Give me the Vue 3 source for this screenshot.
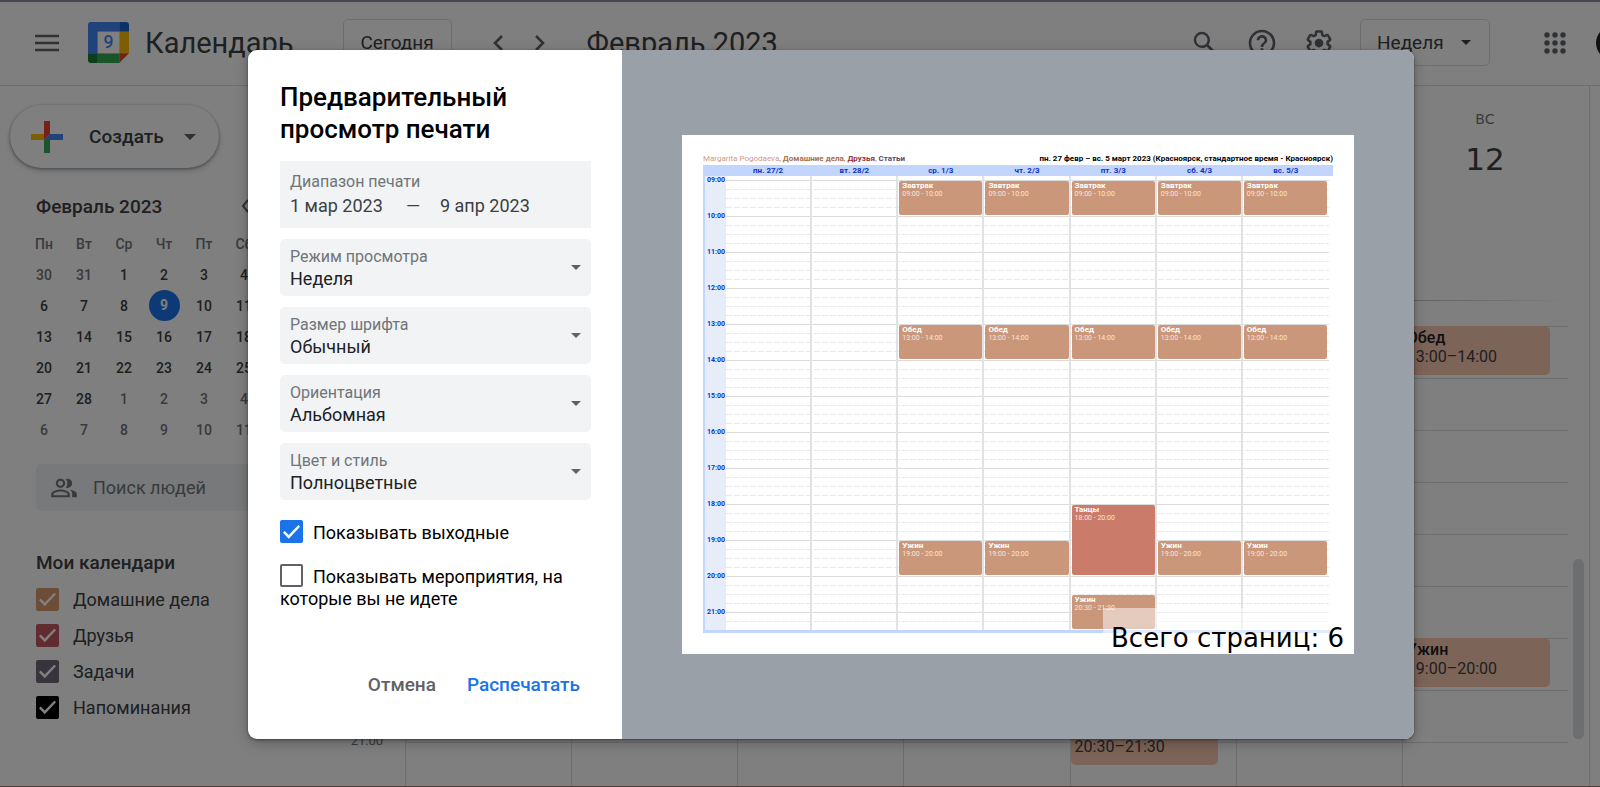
<script setup>
import { ref } from 'vue'

const weekdays = ['Пн', 'Вт', 'Ср', 'Чт', 'Пт', 'Сб']
const weeks = [
  [30, 31, 1, 2, 3, 4],
  [6, 7, 8, 9, 10, 11],
  [13, 14, 15, 16, 17, 18],
  [20, 21, 22, 23, 24, 25],
  [27, 28, 1, 2, 3, 4],
  [6, 7, 8, 9, 10, 11],
]
const isOther = (w, d) => (w === 0 && d > 20) || (w === 4 && d < 20) || w === 5
const isToday = (w, d) => w === 1 && d === 9

const calendars = [
  { id: 'home', name: 'Домашние дела', tone: 'tan' },
  { id: 'friends', name: 'Друзья', tone: 'rose' },
  { id: 'tasks', name: 'Задачи', tone: 'slate' },
  { id: 'reminders', name: 'Напоминания', tone: 'ink' },
]

const fields = [
  { id: 'view', label: 'Режим просмотра', value: 'Неделя' },
  { id: 'font', label: 'Размер шрифта', value: 'Обычный' },
  { id: 'orient', label: 'Ориентация', value: 'Альбомная' },
  { id: 'color', label: 'Цвет и стиль', value: 'Полноцветные' },
]
const weekends = ref(true)
const declined = ref(false)

const lunch = { title: 'Обед', from: 13, to: 14 }
const dinner = { title: 'Ужин', from: 19, to: 20 }
const lateDinner = { title: 'Ужин', from: 20.5, to: 21.5 }
const breakfast = { title: 'Завтрак', from: 9, to: 10 }
const dance = { title: 'Танцы', from: 18, to: 20, tone: 'red' }

const usual = [breakfast, lunch, dinner]
const days = [
  { name: 'пн. 27/2', events: [] },
  { name: 'вт. 28/2', events: [] },
  { name: 'ср. 1/3', events: usual },
  { name: 'чт. 2/3', events: usual },
  { name: 'пт. 3/3', events: [breakfast, lunch, dance, lateDinner] },
  { name: 'сб. 4/3', events: usual },
  { name: 'вс. 5/3', events: usual },
]
const mainDays = [[], [], [], [], [lateDinner], [], [lunch, dinner]]

const clock = (h) => String(Math.floor(h)).padStart(2, '0') + ':' + (h % 1 ? '30' : '00')
const hours = Array.from({ length: 13 }, (_, i) => clock(9 + i))

// The printed sheet covers 9:00 to 21:30
const sheetPlace = (e) => ({
  top: ((e.from - 9) / 12.5) * 100 + '%',
  height: ((e.to - e.from) / 12.5) * 100 + '%',
})
// The week grid behind covers nine hours from 13:00
const gridPlace = (e) => ({
  top: ((e.from - 13) / 9) * 100 + '%',
  height: ((e.to - e.from) / 9) * 100 + '%',
})
</script>

<template>
  <div class="app">
    <header class="bar">
      <button class="icon menu" aria-label="Главное меню">
        <svg width="24" height="18" viewBox="0 0 24 18"><path d="M0 2h24M0 9h24M0 16h24" stroke="currentColor" stroke-width="2.4" /></svg>
      </button>
      <svg class="logo" width="41" height="41" viewBox="0 0 42 42">
        <path d="M3 0h29v10H10v22H0V3a3 3 0 0 1 3-3z" fill="#4285f4" />
        <path d="M32 0h7a3 3 0 0 1 3 3v7H32z" fill="#1967d2" />
        <path d="M32 10h10v22H32z" fill="#fbbc04" />
        <path d="M10 32h22v10H10z" fill="#34a853" />
        <path d="M0 32h10v10H3a3 3 0 0 1-3-3z" fill="#188038" />
        <path d="M32 32h10L32 42z" fill="#ea4335" />
        <path d="M10 10h22v22H10z" fill="#fff" />
        <text x="21" y="27" text-anchor="middle" class="logo-num">9</text>
      </svg>
      <span class="brand">Календарь</span>
      <button class="outlined today">Сегодня</button>
      <button class="icon prev" aria-label="Предыдущая неделя">
        <svg width="12" height="18" viewBox="0 0 12 18"><path d="M10 2L3 9l7 7" fill="none" stroke="currentColor" stroke-width="2.6" /></svg>
      </button>
      <button class="icon next" aria-label="Следующая неделя">
        <svg width="12" height="18" viewBox="0 0 12 18"><path d="M2 2l7 7-7 7" fill="none" stroke="currentColor" stroke-width="2.6" /></svg>
      </button>
      <h2 class="period">Февраль 2023</h2>
      <div class="tools">
        <button class="icon" aria-label="Поиск">
          <svg width="30" height="30" viewBox="0 0 24 24"><path fill="currentColor" d="M20.49 19l-5.73-5.73C15.53 12.2 16 10.91 16 9.5A6.5 6.5 0 1 0 9.5 16c1.41 0 2.7-.47 3.77-1.24L19 20.49 20.49 19zM5 9.5C5 7.01 7.01 5 9.5 5S14 7.01 14 9.5 11.99 14 9.5 14 5 11.99 5 9.5z" /></svg>
        </button>
        <button class="icon" aria-label="Справка">
          <svg width="32" height="32" viewBox="0 0 24 24"><path fill="currentColor" d="M11 18h2v-2h-2v2zm1-16C6.48 2 2 6.48 2 12s4.48 10 10 10 10-4.48 10-10S17.52 2 12 2zm0 18c-4.41 0-8-3.59-8-8s3.59-8 8-8 8 3.59 8 8-3.59 8-8 8zm0-14c-2.21 0-4 1.79-4 4h2c0-1.1.9-2 2-2s2 .9 2 2c0 2-3 1.75-3 5h2c0-2.25 3-2.5 3-5 0-2.21-1.79-4-4-4z" /></svg>
        </button>
        <button class="icon" aria-label="Настройки">
          <svg width="30" height="30" viewBox="0 0 24 24"><path fill="currentColor" d="M13.85 22.25h-3.7c-.74 0-1.36-.54-1.45-1.27l-.27-1.89c-.27-.14-.53-.29-.79-.46l-1.8.72c-.7.26-1.47-.03-1.81-.65L2.2 15.53c-.35-.66-.2-1.44.36-1.88l1.53-1.19c-.01-.15-.02-.3-.02-.46 0-.15.01-.31.02-.46l-1.52-1.19c-.59-.45-.74-1.26-.37-1.88l1.85-3.19c.34-.62 1.11-.9 1.79-.63l1.81.73c.26-.17.52-.32.78-.46l.27-1.91c.09-.7.71-1.25 1.44-1.25h3.7c.74 0 1.36.54 1.45 1.27l.27 1.89c.27.14.53.29.79.46l1.8-.72c.71-.26 1.48.03 1.82.65l1.84 3.18c.36.66.2 1.44-.36 1.88l-1.52 1.19c.01.15.02.3.02.46s-.01.31-.02.46l1.52 1.19c.56.45.72 1.23.37 1.86l-1.86 3.22c-.34.62-1.11.9-1.8.63l-1.8-.72c-.26.17-.52.32-.78.46l-.27 1.91c-.1.68-.72 1.22-1.46 1.22zm-3.23-2h2.76l.37-2.55.53-.22c.44-.18.88-.44 1.34-.78l.45-.34 2.38.96 1.38-2.4-2.03-1.58.07-.56c.03-.26.06-.51.06-.78s-.03-.53-.06-.78l-.07-.56 2.03-1.58-1.39-2.4-2.39.96-.45-.35c-.42-.32-.87-.58-1.33-.77l-.52-.22-.37-2.55h-2.76l-.37 2.55-.53.21c-.44.19-.88.44-1.34.79l-.45.33-2.38-.95-1.39 2.39 2.03 1.58-.07.56a7 7 0 0 0-.06.79c0 .26.02.53.06.78l.07.56-2.03 1.58 1.38 2.4 2.39-.96.45.35c.43.33.86.58 1.33.77l.53.22.38 2.55z" /><circle cx="12" cy="12" r="3.5" fill="currentColor" /></svg>
        </button>
        <button class="outlined view">Неделя
          <svg width="10" height="5" viewBox="0 0 10 5"><path d="M0 0h10L5 5z" fill="currentColor" /></svg>
        </button>
        <button class="icon apps" aria-label="Приложения">
          <svg width="22" height="22" viewBox="0 0 22 22" fill="currentColor">
            <template v-for="y in 3" :key="y"><circle v-for="x in 3" :key="x" :cx="x * 8 - 5" :cy="y * 8 - 5" r="2.7" /></template>
          </svg>
        </button>
        <span class="avatar"></span>
      </div>
    </header>

    <div class="body">
      <aside class="side">
        <button class="create">
          <svg width="32" height="32" viewBox="0 0 32 32">
            <path d="M13 0h6v13l-6 6z" fill="#ea4335" />
            <path d="M0 13h13v6H0z" fill="#fbbc04" />
            <path d="M19 13h13v6H13z" fill="#4285f4" />
            <path d="M13 19h6v13h-6z" fill="#34a853" />
          </svg>
          <span>Создать</span>
          <svg class="caret" width="12" height="6" viewBox="0 0 12 6"><path d="M0 0h12L6 6z" fill="#5f6368" /></svg>
        </button>

        <div class="mini-head">
          <span>Февраль 2023</span>
          <svg width="9" height="14" viewBox="0 0 9 14"><path d="M7 1L2 7l5 6" fill="none" stroke="#5f6368" stroke-width="2" /></svg>
        </div>
        <table class="mini">
          <thead>
            <tr><th v-for="d in weekdays" :key="d">{{ d }}</th></tr>
          </thead>
          <tbody>
            <tr v-for="(row, w) in weeks" :key="w">
              <td v-for="d in row" :key="d" :class="{ other: isOther(w, d), now: isToday(w, d) }"><span>{{ d }}</span></td>
            </tr>
          </tbody>
        </table>

        <label class="people">
          <svg width="28" height="28" viewBox="0 0 24 24"><path fill="currentColor" d="M9 12c2.21 0 4-1.79 4-4s-1.79-4-4-4-4 1.79-4 4 1.79 4 4 4zm0-6.200c1.200 0 2.200 1 2.200 2.200S10.200 10.200 9 10.200 6.800 9.200 6.800 8 7.800 5.800 9 5.800zm0 7.400c-2.700 0-8 1.350-8 4V20h16v-2.800c0-2.650-5.300-4-8-4zm6 5H3v-.8c0-.9 3-2.300 6-2.300s6 1.400 6 2.300v.8zM15 12c2.210 0 4-1.790 4-4s-1.790-4-4-4c-.5 0-1 .1-1.400.25A6 6 0 0 1 14.900 8c0 1.400-.5 2.700-1.300 3.750.4.150.9.250 1.400.25zm2.200 1.500c1.100.9 1.800 2.100 1.800 3.700V20h4v-2.800c0-2-3-3.200-5.800-3.700z" /></svg>
          <input type="text" placeholder="Поиск людей" aria-label="Поиск людей" />
        </label>

        <h3 class="mine">Мои календари</h3>
        <label v-for="c in calendars" :key="c.id" class="cal">
          <input type="checkbox" checked class="tick" :class="c.tone" />
          <span>{{ c.name }}</span>
        </label>
      </aside>

      <main class="week">
        <div class="week-head">
          <div v-for="n in 6" :key="n"></div>
          <div class="day-name"><span>ВС</span><strong>12</strong></div>
        </div>
        <div class="grid">
          <div class="labels"><span>21:00</span></div>
          <div class="cols">
            <div class="lines"><i v-for="n in 9" :key="n"></i></div>
            <div v-for="(list, i) in mainDays" :key="i" class="col">
              <article v-for="e in list" :key="e.from" class="event" :style="gridPlace(e)">
                <div><b>{{ e.title }}</b><span>{{ clock(e.from) }}–{{ clock(e.to) }}</span></div>
              </article>
            </div>
          </div>
        </div>
      </main>
      <div class="gutter"><span class="thumb"></span></div>
    </div>

    <div class="scrim">
      <section class="dialog" role="dialog" aria-labelledby="print-title">
        <form class="form" @submit.prevent>
          <h1 id="print-title">Предварительный просмотр печати</h1>
          <fieldset class="range">
            <legend>Диапазон печати</legend>
            <input type="text" value="1 мар 2023" aria-label="Начало" />
            <span>—</span>
            <input type="text" value="9 апр 2023" aria-label="Конец" />
          </fieldset>
          <div v-for="f in fields" :key="f.id" class="field">
            <label :for="f.id">{{ f.label }}</label>
            <select :id="f.id"><option>{{ f.value }}</option></select>
            <svg width="10" height="5" viewBox="0 0 10 5"><path d="M0 0h10L5 5z" fill="#5f6368" /></svg>
          </div>
          <label class="check"><input v-model="weekends" type="checkbox" class="tick blue" />Показывать выходные</label>
          <label class="check"><input v-model="declined" type="checkbox" class="tick blue" />Показывать мероприятия, на которые вы не идете</label>
          <div class="actions">
            <button type="button">Отмена</button>
            <button type="submit" class="primary">Распечатать</button>
          </div>
        </form>

        <div class="preview">
          <div class="sheet">
            <div class="sheet-top">
              <p class="owners"><span class="o1">Margarita Pogodaeva</span>, <span class="o2">Домашние дела</span>, <span class="o3">Друзья</span>, <span class="o4">Статьи</span></p>
              <p class="when">пн. 27 февр – вс. 5 март 2023 (Красноярск, стандартное время - Красноярск)</p>
            </div>
            <div class="band"><span v-for="d in days" :key="d.name">{{ d.name }}</span></div>
            <div class="table">
              <div class="times"><span v-for="h in hours" :key="h">{{ h }}</span></div>
              <div class="slots">
                <div class="quarters"><i v-for="n in 50" :key="n" :class="{ hour: n % 4 === 1 }"></i></div>
                <div v-for="d in days" :key="d.name" class="slot-col">
                  <div class="track">
                    <article v-for="e in d.events" :key="e.from" class="print-event" :style="sheetPlace(e)">
                      <div :class="e.tone"><b>{{ e.title }}</b><span>{{ clock(e.from) }} - {{ clock(e.to) }}</span></div>
                    </article>
                  </div>
                </div>
              </div>
            </div>
            <div class="total">Всего страниц: 6</div>
          </div>
        </div>
      </section>
    </div>
  </div>
</template>

<style>
body { margin: 0; }
</style>

<style scoped>
* { box-sizing: border-box; }
.app {
  position: relative;
  display: flex;
  flex-direction: column;
  height: 100vh;
  overflow: hidden;
  background: #fff;
  color: #3c4043;
  font-family: Roboto, "Noto Sans", sans-serif;
  font-size: 18px;
}
button, input, select { font: inherit; color: inherit; }
button { padding: 0; border: 0; background: none; }
svg { display: block; flex: none; }
h1, h2, h3, p { margin: 0; font-weight: 400; }

.bar {
  display: flex;
  align-items: center;
  flex: none;
  height: 86px;
  padding: 0 0 2px 35px;
  border-top: 2px solid #8f8da0;
  border-bottom: 1px solid #dadce0;
}
.icon { color: #5f6368; }
.logo { margin-left: 29px; }
.logo-num { font-size: 18px; font-weight: 500; fill: #4285f4; }
.brand { margin-left: 16px; font-size: 29px; }
.outlined {
  height: 47px;
  border: 1px solid #dadce0;
  border-radius: 5px;
  font-size: 19px;
}
.today { width: 109px; margin-left: 49px; }
.prev { margin-left: 40px; }
.next { margin-left: 30px; }
.period { margin-left: 41px; font-size: 29px; }
.tools { display: flex; align-items: center; margin-left: auto; }
.tools .icon + .icon { margin-left: 26px; }
.tools .view {
  display: flex;
  align-items: center;
  justify-content: space-between;
  width: 130px;
  margin-left: 26px;
  padding: 0 18px 0 16px;
}
.tools .apps { margin-left: 54px; }
.avatar {
  width: 34px;
  height: 34px;
  margin: 0 -30px 0 30px;
  border-radius: 50%;
  background: #222;
}

.body { display: flex; flex: 1; min-height: 0; }
.side { flex: none; width: 347px; padding: 19px 12px 0 10px; }
.create {
  display: flex;
  align-items: center;
  width: 209px;
  height: 63px;
  padding-left: 21px;
  border-radius: 32px;
  font-size: 19px;
  font-weight: 500;
  box-shadow: 0 1px 3px #8b9096, 0 3px 6px #d5d8dc;
}
.create span { margin-left: 26px; }
.caret { margin-left: 20px; }
.mini-head {
  display: flex;
  align-items: center;
  width: 220px;
  height: 24px;
  margin: 26px 0 0 26px;
  justify-content: space-between;
  font-size: 19px;
  font-weight: 500;
}
.mini-head svg { margin-right: 6px; }
.mini {
  width: 240px;
  margin: 10px 0 0 14px;
  border-collapse: collapse;
  table-layout: fixed;
  font-size: 14px;
  font-weight: 500;
  text-align: center;
}
.mini th, .mini td { height: 31px; padding: 0; font-weight: 500; line-height: 16px; }
.mini th, .mini .other { color: #70757a; }
.now span {
  display: block;
  width: 31px;
  margin: 0 auto;
  border-radius: 50%;
  background: #1a73e8;
  color: #fff;
  font-weight: 700;
  line-height: 31px;
}
.people {
  display: flex;
  align-items: center;
  height: 47px;
  margin: 19px 0 0 26px;
  padding-left: 14px;
  border-radius: 5px;
  background: #f1f3f4;
  color: #70757a;
}
.people input {
  width: 200px;
  margin-left: 15px;
  padding: 0;
  border: 0;
  background: none;
  font-size: 18px;
}
.people input::placeholder { color: #70757a; opacity: 1; }
.mine { margin: 40px 0 12px 26px; font-size: 19px; font-weight: 500; line-height: 24px; }
.cal { display: flex; align-items: center; height: 24px; margin: 0 0 12px 26px; font-size: 18px; }
.cal span { margin-left: 14px; }

.tick {
  position: relative;
  appearance: none;
  display: inline-block;
  width: 23px;
  height: 23px;
  margin: 0;
  border: 2px solid #5f6368;
  border-radius: 2px;
}
.tick:checked { border-color: currentColor; background: currentColor; }
.tick:checked::after {
  content: "";
  position: absolute;
  inset: 3px 1px 2px;
  background: #fff;
  clip-path: polygon(0 55%, 10% 43%, 34% 72%, 91% 0, 100% 12%, 34% 98%);
}
.tan { color: #d89a70; }
.rose { color: #c2585f; }
.slate { color: #706878; }
.ink { color: #000; }
.blue { color: #1a73e8; }

.week { display: flex; flex: 1; flex-direction: column; min-width: 0; }
.week-head {
  display: grid;
  grid-template-columns: repeat(7, 1fr);
  flex: none;
  height: 215px;
  margin-left: 58px;
  background: linear-gradient(90deg, #c4c6ca 88%, #fff) bottom / 100% 1px no-repeat;
}
.day-name {
  display: flex;
  flex-direction: column;
  align-items: center;
  padding-top: 23px;
  font-family: "DejaVu Sans", sans-serif;
}
.day-name span { color: #70757a; font-size: 14px; line-height: 20px; }
.day-name strong { margin-top: 10px; font-size: 31px; font-weight: 400; line-height: 40px; }
.grid { display: flex; flex: none; height: 493px; }
.labels { width: 58px; padding: 432px 22px 0 0; text-align: right; font-size: 13px; line-height: 16px; color: #70757a; }
.cols { position: relative; display: grid; flex: 1; grid-template-columns: repeat(7, 1fr); padding-top: 25px; }
.lines { position: absolute; inset: 25px 0 0; display: grid; grid-template-rows: repeat(9, 1fr); }
.lines i { border-top: 1px solid #dadce0; }
.col { position: relative; border-left: 1px solid #dadce0; }
.event { position: absolute; left: 0; right: 18px; padding-bottom: 3px; }
.event div {
  display: flex;
  flex-direction: column;
  height: 100%;
  padding: 2px 4px;
  border-radius: 5px;
  background: #fac8b0;
  font-size: 16px;
  line-height: 19px;
}
.event b { color: #202124; font-weight: 500; }
.gutter {
  display: flex;
  align-items: flex-end;
  flex: none;
  width: 22px;
  margin-right: 10px;
  padding: 0 0 48px 5px;
  border-right: 1px solid #dadce0;
}
.thumb { width: 11px; height: 180px; border-radius: 6px; background: #dadce0; }

.scrim {
  position: absolute;
  inset: 0;
  display: flex;
  padding: 50px 186px 47px 248px;
  border-bottom: 1px solid #4a3c3c;
  background: rgba(0, 0, 0, .5);
}
.dialog {
  display: flex;
  flex: 1;
  overflow: hidden;
  border-radius: 9px;
  background: #fff;
  box-shadow: 0 1px 3px rgba(0, 0, 0, .4), 0 4px 14px rgba(0, 0, 0, .25);
}
.form { display: flex; flex-direction: column; flex: none; width: 374px; padding: 31px 31px 0 32px; color: #202124; }
.form h1 { margin-bottom: 16px; color: #000; font-size: 26px; font-weight: 500; line-height: 32px; }
.range {
  height: 67px;
  margin: 0;
  padding: 11px 10px 0;
  border: 0;
  background: #f1f3f4;
  color: #3c4043;
  font-size: 0;
}
.range legend { float: left; width: 100%; margin-bottom: 2px; padding: 0; color: #70757a; font-size: 16px; line-height: 20px; }
.range input { width: 96px; height: 22px; padding: 0; border: 0; background: none; font-size: 18px; }
.range span { display: inline-block; width: 54px; font-size: 18px; line-height: 22px; text-align: center; }
.field { position: relative; height: 57px; margin-top: 11px; padding: 8px 10px 0; border-radius: 5px; background: #f1f3f4; }
.field label { display: block; color: #70757a; font-size: 16px; line-height: 20px; }
.field select { appearance: none; display: block; width: 100%; height: 22px; padding: 0; border: 0; background: none; }
.field svg { position: absolute; right: 10px; top: 26px; }
.check { display: block; margin-top: 20px; line-height: 22px; color: #000; }
.check .tick { margin-right: 10px; vertical-align: -4px; }
.actions { display: flex; justify-content: flex-end; gap: 31px; margin: auto 11px 42px 0; font-size: 19px; font-weight: 500; line-height: 24px; color: #5f6368; }
.primary { color: #1a73e8; }

.preview { display: flex; flex: 1; align-items: center; min-width: 0; padding: 0 60px; background: #9aa0a8; }
.sheet { position: relative; flex: 1; min-width: 0; padding: 18px 21px 21px; background: #fff; font-size: 8px; line-height: 12px; }
.sheet-top { display: flex; justify-content: space-between; white-space: nowrap; }
.owners { color: #9a5a4a; }
.owners .o1 { color: #d09a88; }
.owners .o2 { color: #a9714f; font-weight: 700; }
.owners .o3 { color: #96313c; font-weight: 700; }
.owners .o4 { color: #6b4460; font-weight: 700; }
.when { color: #000; font-weight: 700; }
.band {
  display: grid;
  grid-template-columns: repeat(7, 1fr);
  padding: 0 4px 0 22px;
  background: #c2d5fd;
  color: #1133c4;
  font-weight: 700;
  line-height: 11px;
  text-align: center;
}
.table { display: flex; padding-right: 4px; border-bottom: 3px solid #c2d5fd; }
.times {
  display: grid;
  grid-auto-rows: 36px;
  flex: none;
  width: 23px;
  height: 454px;
  padding-right: 1px;
  border-left: 2px solid #c2d5fd;
  background: #e6edf9;
  color: #1133c4;
  font-size: 7px;
  font-weight: 700;
  line-height: 9px;
  text-align: right;
}
.slots { position: relative; display: grid; flex: 1; grid-template-columns: repeat(7, 1fr); padding-top: 4px; }
.quarters { position: absolute; inset: 4px 0 0; display: grid; grid-template-rows: repeat(50, 1fr); }
.quarters i { height: 1px; background: repeating-linear-gradient(90deg, #e9e9e9 0 6px, #fafafa 6px 8px); }
.quarters .hour { background: #dcdcdc; }
.slot-col { position: relative; margin-top: -4px; padding: 4px 0 0; border-right: 2px solid #e2e2e2; }
.slot-col:last-child { border-right-color: transparent; }
.track { position: relative; height: 100%; margin-left: 1px; }
.print-event { position: absolute; left: 0; right: 0; padding: 1px 0; }
.print-event div {
  display: flex;
  flex-direction: column;
  height: 100%;
  padding: 1px 3px;
  border-radius: 2px;
  background: #cb977a;
  color: #f7e6dc;
  font-size: 7px;
  line-height: 8px;
}
.print-event .red { background: #cb7b6a; }
.print-event b { color: #fff; font-size: 8px; }
.total {
  position: absolute;
  right: 0;
  bottom: 0;
  padding: 14px 10px 0 8px;
  background: rgba(255, 255, 255, .5);
  color: #000;
  font-family: "DejaVu Sans", sans-serif;
  font-size: 26px;
  line-height: 32px;
}
</style>
